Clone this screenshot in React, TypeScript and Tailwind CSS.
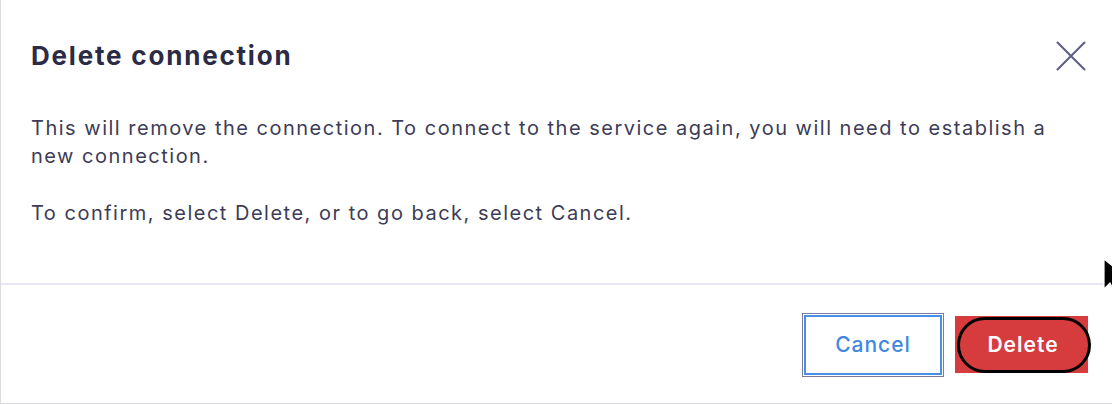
import React from "react";

export default function App() {
  return (
    <div
      className="relative w-[1112px] h-[404px] bg-white overflow-hidden"
      style={{ fontFamily: 'Inter, "Open Sans", "Liberation Sans", sans-serif' }}
    >
      <div className="flex flex-col h-[404px] border-l border-b border-[#dcdce0]">
        <div className="h-[283px] flex flex-col">
          <div className="flex items-start justify-between pl-[30px] pr-[26px] pt-[40px]">
            <h1 className="text-[26px] leading-[32px] font-bold text-[#2b2b45] tracking-[1.8px]">
              Delete connection
            </h1>
            <button className="mt-[1px] w-[30px] h-[30px] flex items-center justify-center text-[#5c5c85]">
              <svg width="30" height="30" viewBox="0 0 30 30" fill="none" stroke="currentColor" strokeWidth="2" strokeLinecap="round">
                <path d="M1.5 1.5 L28.5 28.5 M28.5 1.5 L1.5 28.5" />
              </svg>
            </button>
          </div>
          <div className="pl-[30px] pr-[40px] pt-[42px] text-[20px] leading-[28px] text-[#3c3c58] tracking-[1.5px]">
            <p>
              This will remove the connection. To connect to the service again, you will need to establish a
              new connection.
            </p>
            <p className="mt-[29px]">To confirm, select Delete, or to go back, select Cancel.</p>
          </div>
        </div>
        <div className="flex-1 border-t-2 border-[#e7e7f6] flex items-start justify-end pr-[24px] pt-[28px] gap-[11px]">
          <button className="w-[142px] h-[64px] border border-[#7a7aa2] p-[1px]">
            <span className="flex w-full h-full items-center justify-center border-2 border-[#4b8ee6] text-[#3f87e2] text-[21px] font-medium tracking-[1px]">
              Cancel
            </span>
          </button>
          <button className="relative mt-[3px] w-[133px] h-[57px] bg-[#d63b3d] flex items-center justify-center">
            <span className="text-white text-[21px] font-semibold tracking-[1px] pl-[3px]">Delete</span>
            <span className="absolute left-[2px] top-[1px] right-[-3px] bottom-0 rounded-full border-[3px] border-black" />
          </button>
        </div>
      </div>
      <svg className="absolute left-[1103px] top-[258px]" width="12" height="38" viewBox="0 0 12 38">
        <path d="M1 1 L1 31 L7 25 L12 35 L12 10 Z" fill="#000" stroke="#fff" strokeWidth="1.2" />
      </svg>
    </div>
  );
}
